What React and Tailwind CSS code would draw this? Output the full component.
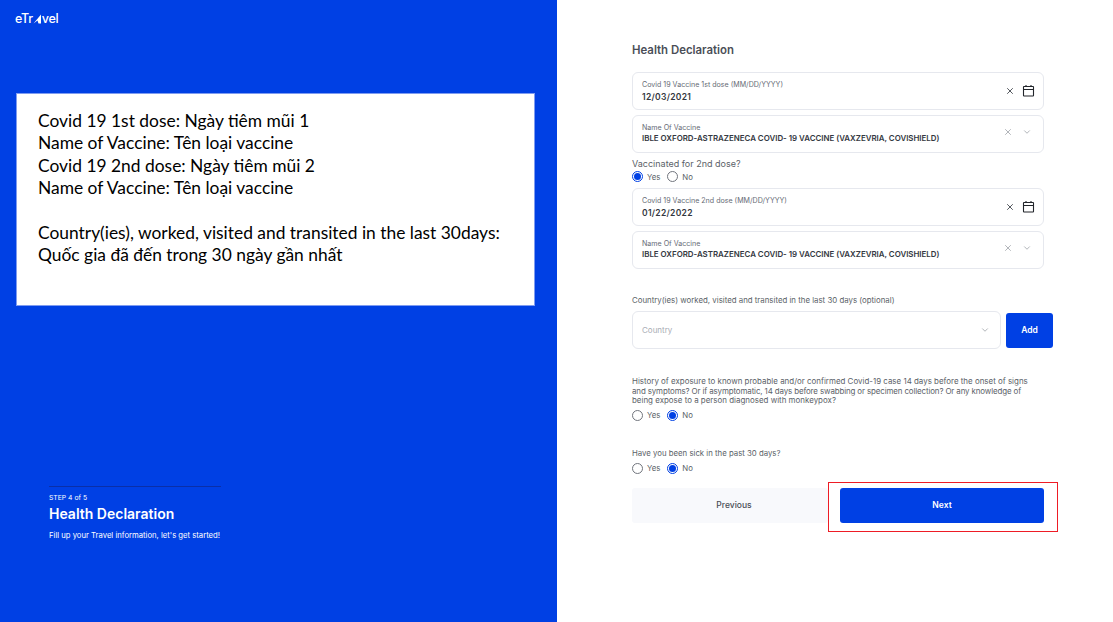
import React from 'react'
import { X, ChevronDown } from 'lucide-react'

function CalendarIcon() {
  return (
    <svg width="13" height="14" viewBox="0 0 13 14" fill="none" stroke="#22252b" strokeWidth="1.1">
      <rect x="1.5" y="2.5" width="10" height="9.5" rx="0.5" />
      <path d="M1.5 5.5 H11.5 M4 1 V3 M9 1 V3" />
    </svg>
  )
}

function Field({ label, value, calendar }) {
  return (
    <div className="flex h-[38px] w-[412px] items-center justify-between rounded-md border border-[#e6e8ee] bg-white pl-[9px] pr-[9px]">
      <div className={calendar ? 'flex flex-col' : 'mb-[2px] flex flex-col'}>
        <span className={calendar ? 'text-[7.1px] leading-[10px] text-[#666b75]' : 'text-[7.1px] leading-[9px] text-[#666b75]'}>{label}</span>
        <span className={calendar ? 'mt-[2px] text-[8.5px] leading-[11px] font-semibold tracking-[0.3px] text-[#333740]' : 'mt-[1px] text-[7.9px] leading-[11px] font-semibold text-[#333740]'}>
          {value}
        </span>
      </div>
      {calendar ? (
        <div className="-mr-[1px] flex items-center gap-[7px]">
          <X size={10} strokeWidth={2} className="text-[#33373f]" />
          <CalendarIcon />
        </div>
      ) : (
        <div className="mb-[4px] flex items-center gap-[9px] pr-[2px]">
          <X size={10} strokeWidth={1.4} className="text-[#7b7f88]" />
          <ChevronDown size={10} strokeWidth={1.4} className="text-[#7b7f88]" />
        </div>
      )}
    </div>
  )
}

function Radio({ checked, label }) {
  return (
    <span className="flex items-center gap-[4px]">
      {checked ? (
        <span className="flex h-[11px] w-[11px] items-center justify-center rounded-full border border-[#0040e4]">
          <span className="h-[7px] w-[7px] rounded-full bg-[#0040e4]" />
        </span>
      ) : (
        <span className="h-[11px] w-[11px] rounded-full border border-[#71757d]" />
      )}
      <span className="text-[7.8px] leading-[10px] text-[#5b5f68]">{label}</span>
    </span>
  )
}

function YesNo({ yes }) {
  return (
    <div className="flex items-center gap-[7px]">
      <Radio checked={yes} label="Yes" />
      <Radio checked={!yes} label="No" />
    </div>
  )
}

export default function App() {
  return (
    <div className="relative flex h-[622px] w-[1113px] overflow-hidden bg-white font-['Inter',sans-serif]">

      {/* LEFT BLUE PANEL */}
      <div className="flex h-full w-[557px] shrink-0 flex-col justify-between bg-[#0040e4] pl-[15px] pb-[81px] pt-[12px] text-white">
        <div className="flex items-center text-[12.5px] leading-[14px] font-medium tracking-[-0.3px]">
          <span>eTr</span>
          <svg width="9" height="10" viewBox="0 0 9 10">
            <path d="M0.5 9.5 L8 0.5 L8 9.5 L5.5 9.5 L4.5 6.5 Z" fill="#fff" />
          </svg>
          <span>vel</span>
        </div>

        <div className="ml-[34px] flex w-[172px] flex-col border-t border-[#0a2fa8] pt-[6px]">
          <span className="text-[6.8px] leading-[10px]">STEP 4 of 5</span>
          <h2 className="mt-[2px] text-[14px] leading-[18px] font-semibold whitespace-nowrap">Health Declaration</h2>
          <p className="mt-[7px] text-[7.7px] leading-[11px] whitespace-nowrap">Fill up your Travel information, let's get started!</p>
        </div>
      </div>

      {/* RIGHT FORM */}
      <div className="flex flex-1 flex-col pl-[75px] pt-[43px]">
        <h1 className="text-[11.4px] leading-[14px] font-semibold text-[#4a4e57]">Health Declaration</h1>

        <div className="mt-[15px] flex flex-col gap-[5px]">
          <Field label="Covid 19 Vaccine 1st dose (MM/DD/YYYY)" value="12/03/2021" calendar />
          <Field label="Name Of Vaccine" value="IBLE OXFORD-ASTRAZENECA COVID- 19 VACCINE (VAXZEVRIA, COVISHIELD)" />
        </div>

        <p className="mt-[5px] text-[9px] leading-[11px] text-[#5b5f68]">Vaccinated for 2nd dose?</p>
        <div className="mt-[2px]"><YesNo yes /></div>

        <div className="mt-[6px] flex flex-col gap-[5px]">
          <Field label="Covid 19 Vaccine 2nd dose (MM/DD/YYYY)" value="01/22/2022" calendar />
          <Field label="Name Of Vaccine" value="IBLE OXFORD-ASTRAZENECA COVID- 19 VACCINE (VAXZEVRIA, COVISHIELD)" />
        </div>

        <p className="mt-[26px] text-[7.85px] leading-[11px] text-[#5b5f68]">Country(ies) worked, visited and transited in the last 30 days (optional)</p>

        <div className="mt-[5px] flex items-center gap-[5px]">
          <div className="flex h-[38px] w-[369px] items-center justify-between rounded-md border border-[#e6e8ee] pl-[9px] pr-[10px]">
            <span className="text-[8px] text-[#a9adb5]">Country</span>
            <ChevronDown size={10} strokeWidth={1.4} className="text-[#7b7f88]" />
          </div>
          <button className="h-[35px] w-[47px] rounded-[3px] bg-[#0040e4] text-[8.5px] font-semibold text-white">Add</button>
        </div>

        <p className="mt-[28px] w-[412px] text-[7.95px] leading-[9.5px] whitespace-nowrap text-[#5b5f68]">
          History of exposure to known probable and/or confirmed Covid-19 case 14 days before the onset of signs
          <span className="block tracking-[-0.13px]">and symptoms? Or if asymptomatic, 14 days before swabbing or specimen collection? Or any knowledge of</span>
          <span className="block">being expose to a person diagnosed with monkeypox?</span>
        </p>
        <div className="mt-[4px]"><YesNo /></div>

        <p className="mt-[27px] text-[7.8px] leading-[11px] text-[#5b5f68]">Have you been sick in the past 30 days?</p>
        <div className="mt-[4px]"><YesNo /></div>

        <div className="mt-[14px] flex w-[412px] gap-[12px]">
          <button className="h-[35px] flex-1 rounded-[3px] bg-[#f8f9fc] pl-[8px] text-[8.5px] font-medium text-[#4a4e57]">Previous</button>
          <button className="h-[35px] w-[204px] rounded-[3px] bg-[#0040e4] text-[8.5px] font-semibold text-white">Next</button>
        </div>
      </div>

      {/* ANNOTATION OVERLAYS */}
      <div className="absolute left-[16px] top-[93px] h-[213px] w-[519px] border border-[#7f9cf0] bg-white pl-[21px] pt-[16px] font-['Lato',sans-serif] text-[17.4px] leading-[22.4px] text-black">
        <p>Covid 19 1st dose: Ngày tiêm mũi 1</p>
        <p>Name of Vaccine: Tên loại vaccine</p>
        <p>Covid 19 2nd dose: Ngày tiêm mũi 2</p>
        <p>Name of Vaccine: Tên loại vaccine</p>
        <p className="mt-[22.4px]">Country(ies), worked, visited and transited in the last 30days:</p>
        <p>Quốc gia đã đến trong 30 ngày gần nhất</p>
      </div>
      <div className="absolute left-[828px] top-[482px] h-[50px] w-[230px] border border-[#ee1c25]" />
    </div>
  )
}
